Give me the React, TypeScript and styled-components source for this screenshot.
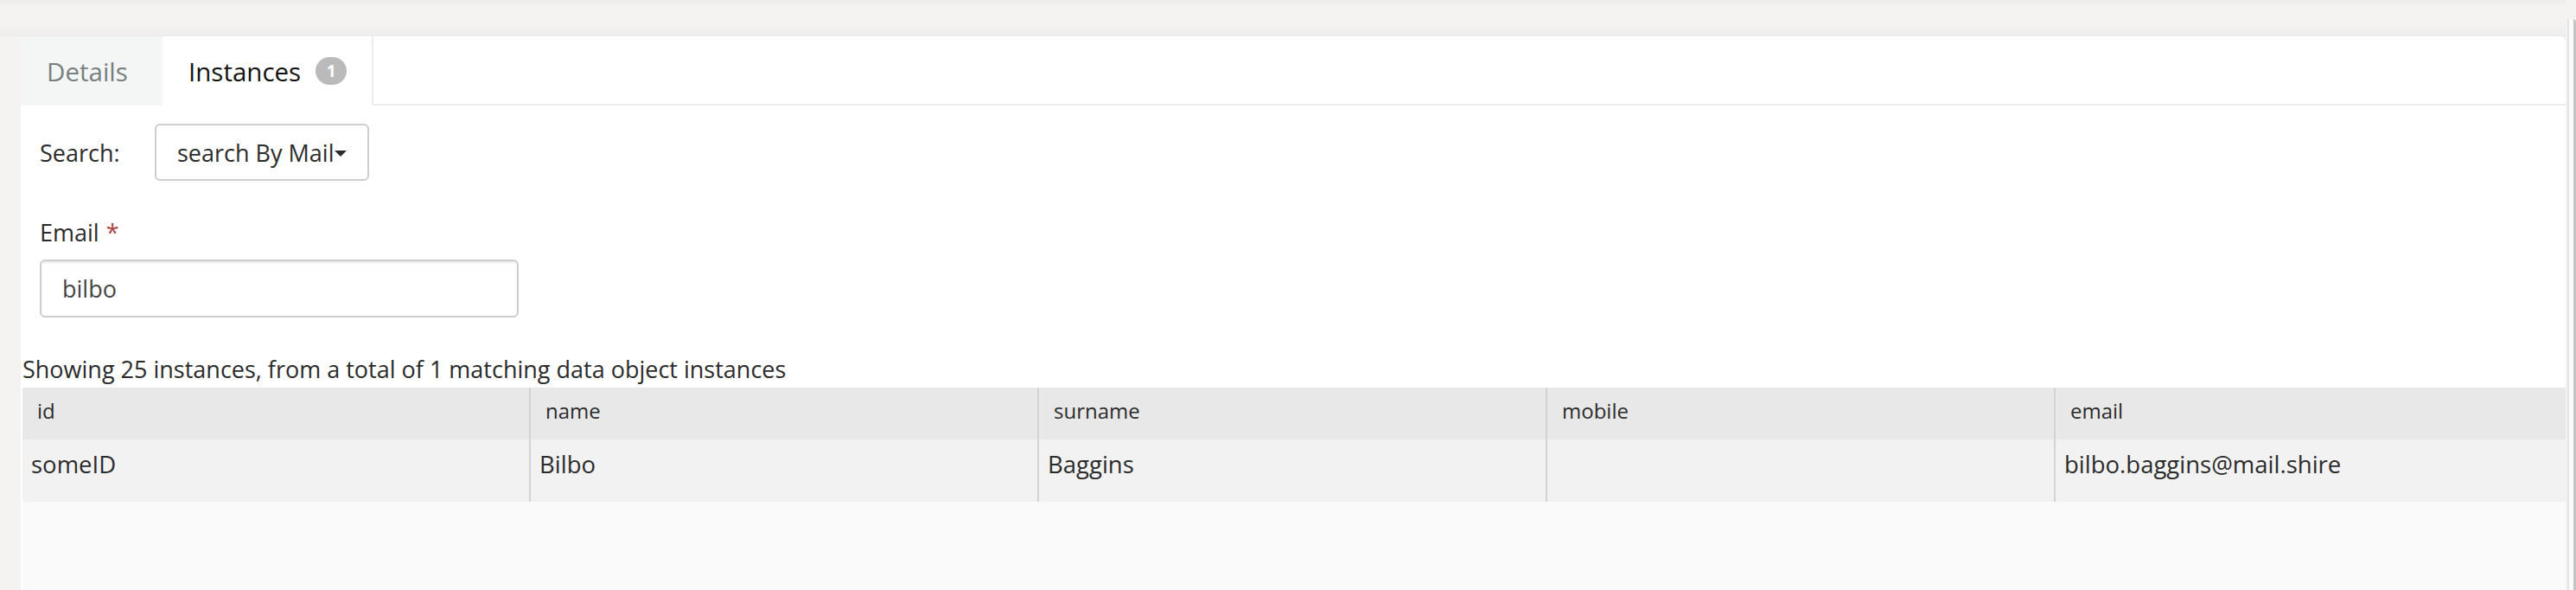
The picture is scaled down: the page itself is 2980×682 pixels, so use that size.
import React from "react";
import styled, { createGlobalStyle } from "styled-components";

const GlobalStyle = createGlobalStyle`
  * { box-sizing: border-box; }
  html, body { margin: 0; padding: 0; }
  body {
    background: #f4f3f1;
    font-family: "Open Sans", "Noto Sans", sans-serif;
    color: #2b2b2b;
    overflow: hidden;
  }
`;

const Page = styled.div`
  display: flex;
  width: 2980px;
  height: 682px;
  overflow: hidden;
`;

const Main = styled.div`
  flex: 1;
  min-width: 0;
  display: flex;
  flex-direction: column;
`;

const TopBar = styled.div`
  flex: none;
  height: 42px;
  background: linear-gradient(
    to bottom,
    #eeedeb 0px,
    #f4f3f1 8px,
    #f4f3f1 26px,
    #eeedeb 42px
  );
`;

const Workspace = styled.div`
  flex: 1;
  min-height: 0;
  display: flex;
  padding-left: 24px;
`;

const Panel = styled.section`
  flex: 1;
  min-width: 0;
  display: flex;
  flex-direction: column;
  background: #fff;
  border-top-right-radius: 8px;
  overflow: hidden;
`;

const RightRail = styled.div`
  flex: none;
  width: 10px;
  margin: 22px 0 0 2px;
  background: #fafafa;
  border-left: 2px solid #e3e3e3;
  border-right: 3px solid #c4c4c4;
  border-top-right-radius: 4px;
`;

const TabBar = styled.nav`
  flex: none;
  display: flex;
  height: 80px;
  border-bottom: 2px solid #ececec;
`;

const Tab = styled.div<{ $active?: boolean }>`
  display: flex;
  align-items: center;
  height: 80px;
  font-size: 29.5px;
  cursor: pointer;
  ${(p) =>
    p.$active
      ? `
    padding: 0 29px 0 30px;
    background: #fff;
    color: #111;
    border-right: 2px solid #ececec;
  `
      : `
    width: 164px;
    padding-left: 30px;
    background: #f4f6f6;
    color: #76807e;
  `}
`;

const Badge = styled.span`
  display: inline-flex;
  align-items: center;
  justify-content: center;
  min-width: 36px;
  height: 32px;
  margin-left: 17px;
  border-radius: 16px;
  background: #bababa;
  color: #fff;
  font-size: 19px;
  font-weight: 700;
`;

const FormArea = styled.div`
  flex: none;
  display: flex;
  flex-direction: column;
  padding: 21px 22px 0;
`;

const SearchRow = styled.div`
  display: flex;
  align-items: center;
  height: 66px;
`;

const SearchLabel = styled.span`
  width: 133px;
  font-size: 27px;
`;

const Dropdown = styled.button`
  display: inline-flex;
  align-items: center;
  width: 248px;
  height: 66px;
  padding: 0 0 0 24px;
  border: 2px solid #cdcdcd;
  border-radius: 6px;
  background: #fff;
  font-family: inherit;
  font-size: 27px;
  color: #2b2b2b;
  cursor: pointer;
`;

const Caret = styled.span`
  display: inline-block;
  width: 0;
  height: 0;
  margin-left: 1px;
  margin-top: 2px;
  border-top: 7px solid #2b2b2b;
  border-left: 7px solid transparent;
  border-right: 7px solid transparent;
`;

const Field = styled.div`
  display: flex;
  flex-direction: column;
  margin-top: 42px;
`;

const FieldLabel = styled.label`
  font-size: 27px;
  line-height: 36px;
`;

const Required = styled.span`
  margin-left: 8px;
  color: #a94442;
`;

const TextInput = styled.input`
  width: 554px;
  height: 67px;
  margin-top: 13px;
  padding: 0 24px;
  border: 2px solid #cdcdcd;
  border-radius: 6px;
  box-shadow: inset 0 2px 2px rgba(0, 0, 0, 0.075);
  font-family: inherit;
  font-size: 27px;
  color: #444;
  outline: none;
`;

const ResultArea = styled.div`
  flex: 1;
  display: flex;
  flex-direction: column;
  padding-left: 2px;
`;

const Summary = styled.p`
  margin: 40px 0 1px;
  font-size: 27px;
  line-height: 40px;
`;

const TableArea = styled.div`
  flex: 1;
  background: #fafafa;
`;

const TableGrid = styled.div`
  display: grid;
  grid-template-columns: 586px repeat(3, 588px) 1fr;
`;

const HeadCell = styled.div<{ $first?: boolean }>`
  display: flex;
  align-items: center;
  height: 60px;
  padding: 0 17px 8px;
  background: #e8e8e8;
  font-size: 24px;
  border-left: ${(p) => (p.$first ? "none" : "2px solid #d3d3d3")};
`;

const BodyCell = styled.div<{ $first?: boolean }>`
  height: 72px;
  padding: 11px 10px 0;
  background: #f2f2f2;
  font-size: 27.5px;
  line-height: 36px;
  white-space: nowrap;
  overflow: hidden;
  border-left: ${(p) => (p.$first ? "none" : "2px solid #d3d3d3")};
`;

const columns = ["id", "name", "surname", "mobile", "email"];
const rows = [
  {
    id: "someID",
    name: "Bilbo",
    surname: "Baggins",
    mobile: "",
    email: "bilbo.baggins@mail.shire",
  },
];

export default function App() {
  return (
    <>
      <GlobalStyle />
      <Page>
        <Main>
          <TopBar />
          <Workspace>
            <Panel>
              <TabBar>
                <Tab>Details</Tab>
                <Tab $active>
                  Instances
                  <Badge>1</Badge>
                </Tab>
              </TabBar>
              <FormArea>
                <SearchRow>
                  <SearchLabel>Search:</SearchLabel>
                  <Dropdown type="button">
                    search By Mail
                    <Caret />
                  </Dropdown>
                </SearchRow>
                <Field>
                  <FieldLabel htmlFor="email">
                    Email<Required>*</Required>
                  </FieldLabel>
                  <TextInput id="email" defaultValue="bilbo" />
                </Field>
              </FormArea>
              <ResultArea>
                <Summary>
                  Showing 25 instances, from a total of 1 matching data object
                  instances
                </Summary>
                <TableArea>
                  <TableGrid>
                    {columns.map((c, i) => (
                      <HeadCell key={c} $first={i === 0}>
                        {c}
                      </HeadCell>
                    ))}
                    {rows.map((r) =>
                      columns.map((c, i) => (
                        <BodyCell key={r.id + c} $first={i === 0}>
                          {(r as Record<string, string>)[c]}
                        </BodyCell>
                      ))
                    )}
                  </TableGrid>
                </TableArea>
              </ResultArea>
            </Panel>
          </Workspace>
        </Main>
        <RightRail />
      </Page>
    </>
  );
}
